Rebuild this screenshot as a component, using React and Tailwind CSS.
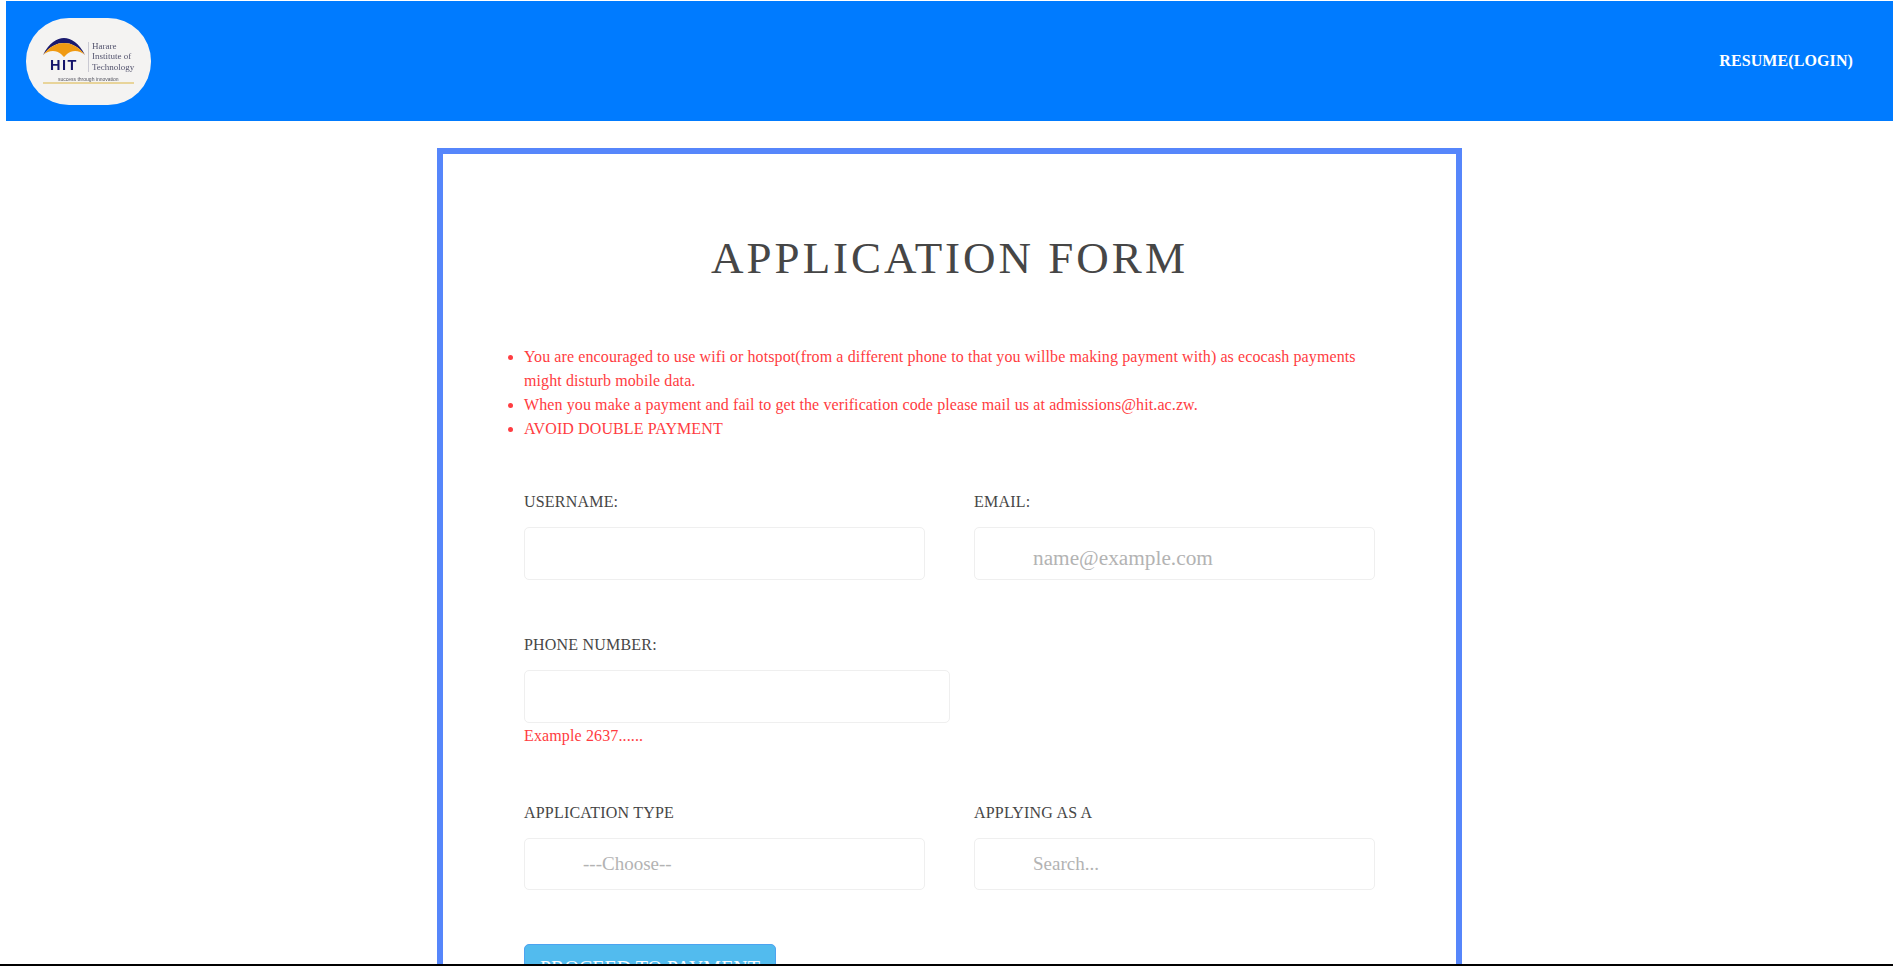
const serif = "font-['Liberation_Serif','Times_New_Roman',serif]"

function HitLogo() {
    return (
        <div className="flex h-[87px] w-[125px] flex-col items-center rounded-[43px] bg-[#f4f3f2] pt-[20px]">
            <div className="flex w-[91px] items-start blur-[0.3px]">
                <div className="flex w-[42px] shrink-0 flex-col items-center">
                    <svg width="42" height="19" viewBox="0 0 42 19">
                        <path d="M0 17 C6 5 14 0 21 0 C28 0 36 5 42 17 C35 8 28 5 21 5 C14 5 7 8 0 17 Z" fill="#1a1a6e" />
                        <path d="M0 17 C7 8 14 5 21 5 C28 5 35 8 42 17 C36 12 29 12 24 16 L21 19 L18 16 C13 12 6 12 0 17 Z" fill="#f09a12" />
                    </svg>
                    <div className="mt-[3px] font-['Liberation_Sans',sans-serif] text-[14.5px] leading-[11px] font-bold tracking-[1.5px] text-[#14146b]">
                        HIT
                    </div>
                </div>
                <div className="mt-[4px] ml-[3px] h-[30px] w-px shrink-0 bg-[#c9c9d2]" />
                <div className="mt-[3px] ml-[3px] text-[9px] leading-[10.7px] whitespace-nowrap text-[#54546e]">
                    Harare
                    <br />
                    Institute of
                    <br />
                    Technology
                </div>
            </div>
            <div className="mt-[3px] w-[91px] pl-[15px] font-['Liberation_Sans',sans-serif] text-[5px] leading-[6px] whitespace-nowrap text-[#55555f] blur-[0.2px]">
                success through innovation
            </div>
            <div className="h-[2px] w-[91px] bg-[#e8d49a]" />
        </div>
    )
}

function Field({ label, placeholder, small, className = "" }) {
    return (
        <div className={className}>
            <label className="block text-[16px] leading-[24px] tracking-[0.2px] text-[#464646]">{label}</label>
            <div className={`mt-[13px] flex items-center rounded-[5px] border border-[#efefef] bg-white pl-[58px] text-[#b3b3b3] ${small ? "h-[52px] text-[19px]" : "h-[53px] text-[21.3px]"}`}>
                {placeholder && <span className={small ? "" : "mt-[11px]"}>{placeholder}</span>}
            </div>
        </div>
    )
}

export default function App() {
    return (
        <div className={`${serif} flex h-[966px] flex-col overflow-hidden bg-white`}>
            <div className="flex-1 overflow-hidden pt-px pl-[6px]">
                <header className="flex h-[120px] items-center justify-between bg-[#007bff] pr-[40px] pl-[20px]">
                    <HitLogo />
                    <a className="text-[16px] font-bold tracking-[0.1px] text-white">RESUME(LOGIN)</a>
                </header>

                <main className="mx-auto mt-[27px] w-[1025px] border-[6px] border-[#5686fb] px-[81px] pt-[77px]">
                    <h1 className="text-center text-[45px] leading-[54px] font-normal tracking-[3px] text-[#464646]">
                        APPLICATION FORM
                    </h1>

                    <ul className="mt-[60px] list-disc text-[16px] tracking-[0.1px] text-[#ff3c41] marker:text-[#ff3c41]">
                        <li className="leading-[24px]">
                            You are encouraged to use wifi or hotspot(from a different phone to that you willbe making payment with) as ecocash payments might disturb mobile data.
                        </li>
                        <li className="leading-[24px]">
                            When you make a payment and fail to get the verification code please mail us at admissions@hit.ac.zw.
                        </li>
                        <li className="leading-[24px]">AVOID DOUBLE PAYMENT</li>
                    </ul>

                    <div className="mt-[49px] grid grid-cols-[401px_401px] gap-x-[49px]">
                        <Field label="USERNAME:" />
                        <Field label="EMAIL:" placeholder="name@example.com" />
                    </div>

                    <div className="mt-[53px]">
                        <Field label="PHONE NUMBER:" className="w-[426px]" />
                        <p className="mt-[1px] text-[16px] leading-[24px] tracking-[0.13px] text-[#ff3c41]">Example 2637......</p>
                    </div>

                    <div className="mt-[53px] grid grid-cols-[401px_401px] gap-x-[49px]">
                        <Field label="APPLICATION TYPE" placeholder="---Choose--" small />
                        <Field label="APPLYING AS A" placeholder="Search..." small />
                    </div>

                    <button className="mt-[54px] h-[47px] w-[252px] rounded-[5px] border border-[#4da3f0] bg-[#52bbee] text-[20px] text-white">
                        PROCEED TO PAYMENT
                    </button>
                </main>
            </div>
            <div className="h-[2px] shrink-0 bg-black" />
        </div>
    )
}
